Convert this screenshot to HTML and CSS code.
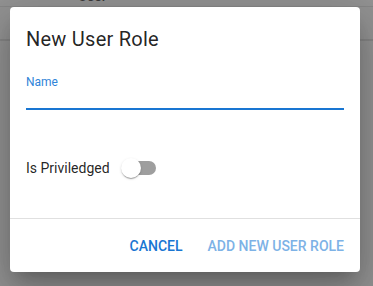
FILE: index.html
```html
<!DOCTYPE html>
<html>
<head>
<meta charset="utf-8">
<link rel="stylesheet" href="styles.css">
</head>
<body>
<div class="page">
  <div class="row row-head"><span class="head-text">User</span></div>
  <div class="row row-two"></div>
</div>
<div class="dialog">
  <h2 class="title">New User Role</h2>
  <div class="content">
    <div class="field">
      <label class="label">Name</label>
      <div class="input"></div>
    </div>
    <div class="switch-row">
      <span class="switch-label">Is Priviledged</span>
      <span class="switch">
        <span class="track"></span>
        <span class="thumb"></span>
      </span>
    </div>
  </div>
  <div class="actions">
    <button class="btn">CANCEL</button>
    <button class="btn btn-light">ADD NEW USER ROLE</button>
  </div>
</div>
</body>
</html>
```
FILE: styles.css
```css
* { box-sizing: border-box; }
html, body { margin: 0; padding: 0; }
body {
  width: 373px;
  height: 286px;
  overflow: hidden;
  background: #939393;
  font-family: Roboto, "Liberation Sans", sans-serif;
  position: relative;
}
.page { width: 100%; }
.row { border-bottom: 1px solid #878787; }
.row-head { height: 19px; padding-left: 78px; }
.head-text {
  display: block;
  margin-top: -12px;
  font-size: 14px;
  line-height: 16px;
  font-weight: 500;
  color: #3a3a3a;
}
.row-two { height: 34px; border-bottom-width: 2px; border-bottom-color: #858585; }

.dialog {
  position: absolute;
  left: 10px;
  top: 7px;
  width: 350px;
  height: 265px;
  background: #fff;
  border-radius: 4px;
  box-shadow: 0 11px 15px -7px rgba(0,0,0,.2), 0 24px 38px 3px rgba(0,0,0,.14), 0 9px 46px 8px rgba(0,0,0,.12);
  display: flex;
  flex-direction: column;
}
.title {
  margin: 0;
  padding: 16px 16px;
  font-size: 20px;
  line-height: 32px;
  font-weight: 400;
  color: rgba(0,0,0,.87);
  letter-spacing: 0.25px;
}
.content {
  padding: 0 16px;
  flex: 0 0 148px;
  border-bottom: 1px solid #e0e0e0;
}
.field { padding-top: 5px; }
.label {
  display: block;
  font-size: 12px;
  line-height: 12px;
  color: #2f84d8;
}
.input {
  height: 22px;
  border-bottom: 2px solid #1976d2;
}
.switch-row {
  margin-top: 39px;
  height: 38px;
  display: flex;
  align-items: center;
}
.switch-label {
  font-size: 14px;
  line-height: 20px;
  color: rgba(0,0,0,.87);
  margin-top: -1px;
}
.switch {
  position: relative;
  width: 36px;
  height: 20px;
  margin-left: 11px;
}
.track {
  position: absolute;
  left: 1px;
  top: 3px;
  width: 34px;
  height: 14px;
  border-radius: 7px;
  background: #9e9e9e;
}
.thumb {
  position: absolute;
  left: 0;
  top: 0;
  width: 20px;
  height: 20px;
  border-radius: 50%;
  background: #fff;
  box-shadow: 0 2px 1px -1px rgba(0,0,0,.2), 0 1px 1px 0 rgba(0,0,0,.14), 0 1px 3px 0 rgba(0,0,0,.12);
}
.actions {
  flex: 1;
  display: flex;
  justify-content: flex-end;
  align-items: center;
  padding: 8px;
  gap: 9px;
}
.btn {
  background: none;
  border: 0;
  padding: 0 8px;
  height: 36px;
  font-family: Roboto, "Liberation Sans", sans-serif;
  font-size: 14px;
  font-weight: 500;
  letter-spacing: 0;
  color: #1976d2;
  text-transform: uppercase;
}
.btn-light { color: #7db2e6; }
```
